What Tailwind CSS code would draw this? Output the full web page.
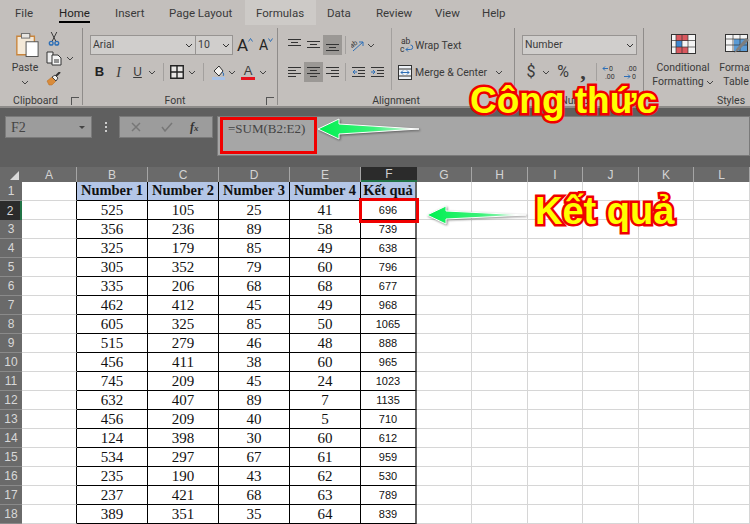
<!DOCTYPE html>
<html lang="vi">
<head>
  <meta charset="UTF-8" />
  <title>Excel SUM</title>
  <script src="https://cdn.jsdelivr.net/npm/@tailwindcss/browser@4"></script>
</head>
<body class="bg-white">
<div class="relative w-[750px] h-[524px] overflow-hidden font-['Roboto',sans-serif] text-[#3a3a3a]">

  <!-- Tabs -->
  <div class="h-[25px] bg-[#c3bfbc] flex pl-[15px] text-[11.5px] leading-[27px]">
    <span class="w-[44px]">File</span>
    <span class="w-[56px]"><span class="inline-block relative h-[25px] text-[#222]">Home<span class="absolute left-0 right-0 bottom-[2px] h-[2px] bg-black"></span></span></span>
    <span class="w-[54px]">Insert</span>
    <span class="w-[76px]">Page Layout</span>
    <span class="w-[71px] pl-[11px] bg-[#cdcac7]">Formulas</span>
    <span class="w-[49px] ml-[11px]">Data</span>
    <span class="w-[59px]">Review</span>
    <span class="w-[47px]">View</span>
    <span>Help</span>
  </div>

  <!-- Ribbon -->
  <div class="h-[83px] bg-[#c3bfbc] flex pt-[3px] text-[10.5px] border-b-2 border-[#8d8b89] overflow-hidden">

    <!-- Clipboard -->
    <div class="w-[83px] shrink-0 h-[77px] border-r border-[#8f8c8a] flex flex-col">
      <div class="flex pt-[4px]">
        <div class="w-[44px] pl-[6px] flex flex-col items-center">
          <svg class="w-[24px] h-[26px] ml-[3px]" viewBox="0 0 26 27"><path d="M2 4h5V2h9v2h5v20H2z" fill="#f4e9d8" stroke="#c9853c" stroke-width="1.5"/><rect x="7" y="1" width="9" height="5" fill="#e8e6e2" stroke="#6b6b6b"/><rect x="12" y="10" width="13" height="16" fill="#fff" stroke="#4a4a4a"/></svg>
          <span class="mt-[3px] leading-[14px]">Paste</span>
          <svg class="w-[8px] h-[5px] mt-[5px]" viewBox="0 0 8 5"><path d="M1 1l3 3 3-3" fill="none" stroke="#444"/></svg>
        </div>
        <div class="flex flex-col ml-[2px]">
          <svg class="w-[12px] h-[14px] ml-[2px]" viewBox="0 0 12 15"><path d="M3 0l5 10M9 0L4 10" stroke="#333" fill="none"/><circle cx="3" cy="12" r="2" fill="none" stroke="#2d6fb7" stroke-width="1.5"/><circle cx="9" cy="12" r="2" fill="none" stroke="#2d6fb7" stroke-width="1.5"/></svg>
          <div class="flex items-center mt-[5px]">
            <svg class="w-[16px] h-[15px]" viewBox="0 0 16 15"><path d="M1 1h6v11H1z" fill="#eee" stroke="#333"/><path d="M6 4h6l3 3v7H6z" fill="#f5f5f5" stroke="#333"/><path d="M8 9h5M8 11h5" stroke="#333"/></svg>
            <svg class="w-[8px] h-[5px] ml-[4px]" viewBox="0 0 8 5"><path d="M1 1l3 3 3-3" fill="none" stroke="#444"/></svg>
          </div>
          <svg class="w-[15px] h-[14px] mt-[6px]" viewBox="0 0 15 14"><path d="M1 9l5-4 4 4-4 4H3z" fill="#d98b3a" stroke="#b56a20" stroke-width=".5"/><path d="M6 5l3-2 3 3-2 3z" fill="#f3f1ee" stroke="#444"/><path d="M10 4l4-4" stroke="#333" stroke-width="2"/></svg>
        </div>
      </div>
      <div class="mt-auto -mb-[3px] h-[14px] leading-[14px] relative text-center pr-[17px] pl-[6px]">Clipboard<span class="absolute right-[3px] top-[3px] w-[8px] h-[8px] border-l border-t border-[#555]"></span></div>
    </div>

    <!-- Font -->
    <div class="w-[195px] shrink-0 h-[77px] border-r border-[#8f8c8a] flex flex-col pt-[7px] pl-[7px]">
      <div class="flex items-center h-[20px]">
        <div class="w-[106px] h-[20px] bg-[#d0cecc] border border-[#979492] flex items-center justify-between px-[2px] leading-[18px]">Arial<svg class="w-[8px] h-[5px]" viewBox="0 0 8 5"><path d="M1 1l3 3 3-3" fill="none" stroke="#333"/></svg></div>
        <div class="w-[37px] h-[20px] bg-[#d0cecc] border border-l-0 border-[#979492] flex items-center justify-between px-[2px]">10<svg class="w-[8px] h-[5px]" viewBox="0 0 8 5"><path d="M1 1l3 3 3-3" fill="none" stroke="#333"/></svg></div>
        <span class="ml-[4px] text-[17px] leading-[20px] text-[#222]">A</span>
        <svg class="w-[5px] h-[4px] mb-[10px]" viewBox="0 0 5 4"><path d="M.5 3.5l2-3 2 3" fill="none" stroke="#2d6fb7"/></svg>
        <span class="ml-[6px] text-[14px] leading-[20px] text-[#222]">A</span>
        <svg class="w-[5px] h-[4px] mb-[10px]" viewBox="0 0 5 4"><path d="M.5.5l2 3 2-3" fill="none" stroke="#2d6fb7"/></svg>
      </div>
      <div class="flex items-center h-[20px] mt-[7px]">
        <span class="w-[19px] text-center font-['Liberation_Sans',sans-serif] font-bold text-[13px] text-[#222]">B</span>
        <span class="w-[19px] text-center font-['Liberation_Serif',serif] italic text-[14px]">I</span>
        <span class="w-[19px] text-center font-['Liberation_Sans',sans-serif] underline text-[12px]">U</span>
        <span class="w-[10px] flex justify-center"><svg class="w-[8px] h-[5px]" viewBox="0 0 8 5"><path d="M1 1l3 3 3-3" fill="none" stroke="#444"/></svg></span>
        <span class="ml-[6px] w-px h-[18px] bg-[#a3a09e]"></span>
        <svg class="ml-[6px] w-[14px] h-[14px]" viewBox="0 0 14 14"><path d="M.75.75h12.5v12.5H.75zM7 1v12M1 7h12" fill="#e8e6e4" stroke="#222" stroke-width="1.4"/></svg>
        <svg class="ml-[4px] w-[8px] h-[5px]" viewBox="0 0 8 5"><path d="M1 1l3 3 3-3" fill="none" stroke="#444"/></svg>
        <span class="ml-[7px] w-px h-[18px] bg-[#a3a09e]"></span>
        <svg class="ml-[8px] w-[13px] h-[15px]" viewBox="0 0 13 15"><path d="M2 6l5-5 4 5-4 5z" fill="#f4f2ef" stroke="#333"/><path d="M10 7c2 1 2 3 1 4" stroke="#2d6fb7" fill="none"/><rect y="12" width="13" height="3" fill="#a9c3e8"/></svg>
        <svg class="ml-[3px] w-[8px] h-[5px]" viewBox="0 0 8 5"><path d="M1 1l3 3 3-3" fill="none" stroke="#444"/></svg>
        <div class="ml-[5px] w-[14px] flex flex-col items-center leading-[13px] text-[13px] font-['Liberation_Sans',sans-serif]"><span>A</span><span class="block w-[14px] h-[3px] bg-[#e8121d]"></span></div>
        <svg class="ml-[4px] w-[8px] h-[5px]" viewBox="0 0 8 5"><path d="M1 1l3 3 3-3" fill="none" stroke="#444"/></svg>
      </div>
      <div class="mt-auto -mb-[3px] h-[14px] leading-[14px] relative text-center pr-[17px]">Font<span class="absolute right-[3px] top-[3px] w-[8px] h-[8px] border-l border-t border-[#555]"></span></div>
    </div>

    <!-- Alignment -->
    <div class="w-[237px] shrink-0 h-[77px] border-r border-[#8f8c8a] flex flex-col">
      <div class="flex h-[62px]">
        <div class="w-[114px] border-r border-[#a3a09e] pt-[7px] pl-[7px]">
          <div class="flex items-center h-[20px]">
            <span class="w-[19px] h-[20px] flex justify-center pt-[4px]"><svg class="w-[13px] h-[8px]" viewBox="0 0 13 8"><path d="M0 .5h13M3 3.5h7M0 6.5h13" stroke="#333"/></svg></span>
            <span class="w-[19px] h-[20px] flex justify-center pt-[6px]"><svg class="w-[13px] h-[8px]" viewBox="0 0 13 8"><path d="M0 .5h13M3 3.5h7M0 6.5h13" stroke="#333"/></svg></span>
            <span class="w-[19px] h-[20px] flex justify-center pt-[9px] bg-[#9b9895]"><svg class="w-[13px] h-[8px]" viewBox="0 0 13 8"><path d="M0 .5h13M3 3.5h7M0 6.5h13" stroke="#333"/></svg></span>
            <span class="ml-[3px] w-px h-[18px] bg-[#a3a09e]"></span>
            <svg class="ml-[5px] w-[14px] h-[15px]" viewBox="0 0 14 15"><text x="0" y="8" font-size="7" fill="#333" transform="rotate(-35 4 8)" font-family="Roboto">ab</text><path d="M2 13L12 4M12 4H8M12 4v4" stroke="#2d6fb7" fill="none"/></svg>
            <svg class="ml-[2px] w-[8px] h-[5px]" viewBox="0 0 8 5"><path d="M1 1l3 3 3-3" fill="none" stroke="#444"/></svg>
          </div>
          <div class="flex items-center h-[20px] mt-[7px]">
            <span class="w-[19px] h-[20px] flex items-center justify-center"><svg class="w-[13px] h-[11px]" viewBox="0 0 13 11"><path d="M0 .5h13M0 3.5h8M0 6.5h13M0 9.5h8" stroke="#333"/></svg></span>
            <span class="w-[19px] h-[20px] flex items-center justify-center bg-[#9b9895]"><svg class="w-[13px] h-[11px]" viewBox="0 0 13 11"><path d="M0 .5h13M3 3.5h7M0 6.5h13M3 9.5h7" stroke="#333"/></svg></span>
            <span class="w-[19px] h-[20px] flex items-center justify-center"><svg class="w-[13px] h-[11px]" viewBox="0 0 13 11"><path d="M0 .5h13M5 3.5h8M0 6.5h13M5 9.5h8" stroke="#333"/></svg></span>
            <span class="ml-[3px] w-px h-[18px] bg-[#a3a09e]"></span>
            <span class="ml-[3px] w-[19px] flex justify-center"><svg class="w-[13px] h-[11px]" viewBox="0 0 13 11"><path d="M0 .5h13M6 3.5h7M6 6.5h7M0 9.5h13" stroke="#333"/><path d="M5 5H1M3 3L1 5l2 2" stroke="#2d6fb7" fill="none"/></svg></span>
            <span class="w-[19px] flex justify-center"><svg class="w-[13px] h-[11px]" viewBox="0 0 13 11"><path d="M0 .5h13M6 3.5h7M6 6.5h7M0 9.5h13" stroke="#333"/><path d="M0 5h4M2 3l2 2-2 2" stroke="#2d6fb7" fill="none"/></svg></span>
          </div>
        </div>
        <div class="pt-[7px] pl-[8px]">
          <div class="flex items-center h-[20px]">
            <svg class="w-[14px] h-[16px]" viewBox="0 0 14 16"><text x="1" y="7" font-size="8.5" fill="#333" font-family="Roboto">ab</text><text x="0" y="14.5" font-size="8.5" fill="#333" font-family="Roboto">c</text><path d="M6 12.5h4.5a2.2 2.2 0 0 0 0-4.5M8 10.5l-2 2 2 2" stroke="#2d6fb7" fill="none"/></svg>
            <span class="ml-[1px] pt-px whitespace-nowrap">Wrap Text</span>
          </div>
          <div class="flex items-center h-[20px] mt-[7px] -ml-[2px]">
            <svg class="w-[14px] h-[15px]" viewBox="0 0 14 15"><rect x=".5" y=".5" width="13" height="14" fill="#eef2f7" stroke="#333"/><path d="M0 4h14M0 11h14" stroke="#333"/><path d="M3 7.5h8M5 5.5l-2 2 2 2M9 5.5l2 2-2 2" stroke="#2d6fb7" fill="none"/></svg>
            <span class="ml-[3px] pt-px whitespace-nowrap">Merge &amp; Center</span>
            <svg class="ml-[8px] w-[8px] h-[5px]" viewBox="0 0 8 5"><path d="M1 1l3 3 3-3" fill="none" stroke="#444"/></svg>
          </div>
        </div>
      </div>
      <div class="mt-auto -mb-[3px] h-[14px] leading-[14px] text-center">Alignment</div>
    </div>

    <!-- Number -->
    <div class="w-[129px] shrink-0 h-[77px] border-r border-[#8f8c8a] flex flex-col pt-[7px] pl-[7px]">
      <div class="w-[115px] h-[20px] bg-[#d0cecc] border border-[#979492] flex items-center justify-between px-[2px]">Number<svg class="w-[8px] h-[5px]" viewBox="0 0 8 5"><path d="M1 1l3 3 3-3" fill="none" stroke="#333"/></svg></div>
      <div class="flex items-center h-[20px] mt-[7px]">
        <span class="ml-[2px] w-[14px] text-center text-[16px]">$</span>
        <svg class="ml-[4px] w-[8px] h-[5px]" viewBox="0 0 8 5"><path d="M1 1l3 3 3-3" fill="none" stroke="#444"/></svg>
        <span class="ml-[5px] w-[16px] text-center text-[16px]">%</span>
        <span class="ml-[6px] w-[12px] text-center text-[22px] leading-[14px] font-bold font-['Liberation_Serif',serif]">,</span>
        <span class="ml-[7px] w-px h-[18px] bg-[#a3a09e]"></span>
        <svg class="ml-[5px] w-[15px] h-[15px]" viewBox="0 0 15 15"><path d="M6 3.5H1M3 1.5l-2 2 2 2" stroke="#2d6fb7" fill="none"/><text x="7" y="6" font-size="7" fill="#333" font-family="Roboto">0</text><text x="3" y="14" font-size="7" fill="#333" font-family="Roboto">.00</text></svg>
        <svg class="ml-[7px] w-[15px] h-[15px]" viewBox="0 0 15 15"><text x="3" y="6" font-size="7" fill="#333" font-family="Roboto">.00</text><path d="M0 11.5h6M4 9.5l2 2-2 2" stroke="#2d6fb7" fill="none"/><text x="8" y="14" font-size="7" fill="#333" font-family="Roboto">0</text></svg>
      </div>
      <div class="mt-auto -mb-[3px] h-[14px] leading-[14px] text-center pr-[7px]">Number</div>
    </div>

    <!-- Styles -->
    <div class="flex-1 min-w-0 h-[77px] flex flex-col">
      <div class="flex leading-[14px] pt-[6px]">
        <div class="w-[78px] shrink-0 -mr-[4px] flex flex-col items-center">
          <svg class="w-[25px] h-[20px]" viewBox="0 0 25 20"><rect x=".5" y=".5" width="24" height="19" fill="#f4f4f4" stroke="#333"/><path d="M5 1h12v6h-6v6h6v6H5z" fill="#d9585e"/><rect x="5" y="7" width="6" height="6" fill="#3f86cf"/><path d="M0 6.5h25M0 13h25M5 0v20M11 0v20M17 0v20" stroke="#333" stroke-width=".7"/></svg>
          <span class="mt-[7px] whitespace-nowrap">Conditional</span>
          <span class="whitespace-nowrap">Formatting<svg class="inline w-[8px] h-[5px] ml-[2px]" viewBox="0 0 8 5"><path d="M1 1l3 3 3-3" fill="none" stroke="#444"/></svg></span>
        </div>
        <div class="w-[36px] shrink-0 flex flex-col items-center">
          <svg class="w-[25px] h-[20px] ml-[3px] shrink-0" viewBox="0 0 25 20"><rect x=".5" y=".5" width="22" height="17" fill="#f4f4f4" stroke="#333"/><rect x="9" y="5" width="13" height="12" fill="#5b9bd5"/><path d="M0 5h23M0 11h23M8 0v18M15 0v18" stroke="#333" stroke-width=".7"/><path d="M9 19l3-5 9-10 3 2-10 10z" fill="#7e7e7e"/></svg>
          <span class="mt-[7px] whitespace-nowrap">Format</span>
          <span>Table</span>
        </div>
      </div>
      <div class="mt-auto -mb-[3px] h-[14px] leading-[14px] pl-[68px] text-center">Styles</div>
    </div>
  </div>

  <!-- Formula bar -->
  <div class="h-[59px] bg-[#5f5f5f] flex items-start pl-[5px] pt-[8px]">
    <div class="w-[87px] shrink-0 h-[22px] bg-[#9c9c9c] border border-[#7a7a7a] flex items-center justify-between pl-[5px] pr-[6px] font-['Liberation_Serif',serif] text-[14px] text-[#444]">F2<span class="w-0 h-0 border-x-[3px] border-t-[3px] border-x-transparent border-t-[#444]"></span></div>
    <div class="w-[27px] shrink-0 h-[22px] flex flex-col items-center justify-center gap-[2px]"><i class="w-[2px] h-[2px] bg-[#ccc]"></i><i class="w-[2px] h-[2px] bg-[#ccc]"></i><i class="w-[2px] h-[2px] bg-[#ccc]"></i></div>
    <div class="w-[94px] shrink-0 h-[22px] bg-[#9c9c9c] border border-[#7a7a7a] flex items-center">
      <svg class="ml-[11px] w-[10px] h-[10px]" viewBox="0 0 10 10"><path d="M1 1l8 8M9 1L1 9" stroke="#777" stroke-width="1.5"/></svg>
      <svg class="ml-[20px] w-[12px] h-[10px]" viewBox="0 0 12 10"><path d="M1 5l3 4 7-8" stroke="#777" stroke-width="1.5" fill="none"/></svg>
      <span class="ml-[17px] font-['Liberation_Serif',serif] italic font-bold text-[12px] leading-[12px] text-[#333]">f<span class="text-[9px]">x</span></span>
    </div>
    <div class="ml-[4px] flex-1 h-[40px] bg-[#a6a6a6] border border-[#7a7a7a] pl-[10px] pt-[3px] font-['Liberation_Serif',serif] text-[13px] leading-[18px] text-[#444]">=SUM(B2:E2)</div>
  </div>

  <!-- Sheet -->
  <div id="sheet" class="grid grid-cols-[22px_55px_71px_71px_71px_71px_56px_55px_56px_55px_56px_55px_56px] grid-rows-[15px_repeat(18,19px)]"></div>

  <!-- Annotations -->
  <svg class="absolute inset-0 w-[750px] h-[524px] pointer-events-none drop-shadow-[1px_1px_1px_rgba(0,0,0,0.45)]" viewBox="0 0 750 524">
    <defs>
      <linearGradient id="arrowFill" x1="0" x2="1" y1="0" y2="0">
        <stop offset="0" stop-color="#00f050"/><stop offset=".55" stop-color="#3cf27a"/><stop offset="1" stop-color="#e8f5ec"/>
      </linearGradient>
    </defs>
    <polygon points="318,129 339,119 339,124 419,129 339,134 339,139" fill="url(#arrowFill)" stroke="#fff" stroke-width="1" stroke-linejoin="round"/>
    <polygon points="427,215 446,206 446,211 526,215 446,219 446,224" fill="url(#arrowFill)" stroke="#fff" stroke-width="1" stroke-linejoin="round"/>
  </svg>
  <div class="absolute left-[220px] top-[117px] w-[97px] h-[37px] border-[3px] border-[#f00000]"></div>
  <div class="absolute left-[359px] top-[198px] w-[60px] h-[25px] border-[3px] border-[#f00000]"></div>
  <span class="absolute left-[470px] top-[79px] font-['Liberation_Sans',sans-serif] font-bold text-[37px] leading-[44px] whitespace-nowrap text-[#ffff00] [-webkit-text-stroke:5px_#f00000] [paint-order:stroke]">Công thức</span>
  <span class="absolute left-[535px] top-[189px] font-['Liberation_Sans',sans-serif] font-bold text-[38px] leading-[44px] whitespace-nowrap text-[#ffff00] [-webkit-text-stroke:5px_#f00000] [paint-order:stroke]">Kết quả</span>
</div>

<script>
  const rows = [
    [525,105,25,41,696],[356,236,89,58,739],[325,179,85,49,638],[305,352,79,60,796],
    [335,206,68,68,677],[462,412,45,49,968],[605,325,85,50,1065],[515,279,46,48,888],
    [456,411,38,60,965],[745,209,45,24,1023],[632,407,89,7,1135],[456,209,40,5,710],
    [124,398,30,60,612],[534,297,67,61,959],[235,190,43,62,530],[237,421,68,63,789],[389,351,35,64,839]
  ];
  const heading = ["Number 1","Number 2","Number 3","Number 4","Kết quả"];
  const letters = ["A","B","C","D","E","F","G","H","I","J","K","L"];
  const hdr = "flex items-center justify-center font-['Liberation_Sans',sans-serif] text-[12px]";
  let html = `<div class="bg-[#6a6a6a] flex items-end justify-end pr-[3px] pb-[2px]"><svg class="w-[9px] h-[9px]" viewBox="0 0 9 9"><path d="M9 0v9H0z" fill="#d9d9d9"/></svg></div>`;
  letters.forEach(l => {
    html += l === "F"
      ? `<div class="${hdr} bg-[#2b2b2b] text-[#cfcfcf] border-b-2 border-[#217346]">${l}</div>`
      : `<div class="${hdr} bg-[#6a6a6a] text-[#d4d4d4] border-r border-[#a5a5a5]">${l}</div>`;
  });
  const blank = `<div class="bg-white border-r border-b border-[#d6d6d6]"></div>`;
  const leftOfTable = `<div class="bg-white border-b border-[#d6d6d6] border-r border-r-black"></div>`;
  const rowHead = n => n === 2
    ? `<div class="${hdr} bg-[#2b2b2b] text-[#d8d8d8] border-r-2 border-[#217346]">${n}</div>`
    : `<div class="${hdr} bg-[#6a6a6a] text-[#d8d8d8] border-b border-[#8a8a8a]">${n}</div>`;
  const line = "flex items-center justify-center border-r border-b border-black text-[#111]";
  const tail = blank.repeat(6);

  html += rowHead(1) + leftOfTable;
  heading.forEach((h, j) => {
    html += `<div class="${line} bg-[#b4c6e7] font-['Liberation_Serif',serif] font-bold text-[14.5px] whitespace-nowrap ${j === 4 ? "border-r-2 border-r-[#666]" : ""}">${h}</div>`;
  });
  html += tail;
  rows.forEach((r, i) => {
    html += rowHead(i + 2) + leftOfTable;
    r.forEach((v, j) => {
      html += j === 4
        ? `<div class="${line} border-r-2 border-r-[#666] font-['Liberation_Sans',sans-serif] text-[11px]">${v}</div>`
        : `<div class="${line} font-['Liberation_Serif',serif] text-[15px]">${v}</div>`;
    });
    html += tail;
  });
  document.getElementById("sheet").innerHTML = html;
</script>
</body>
</html>
